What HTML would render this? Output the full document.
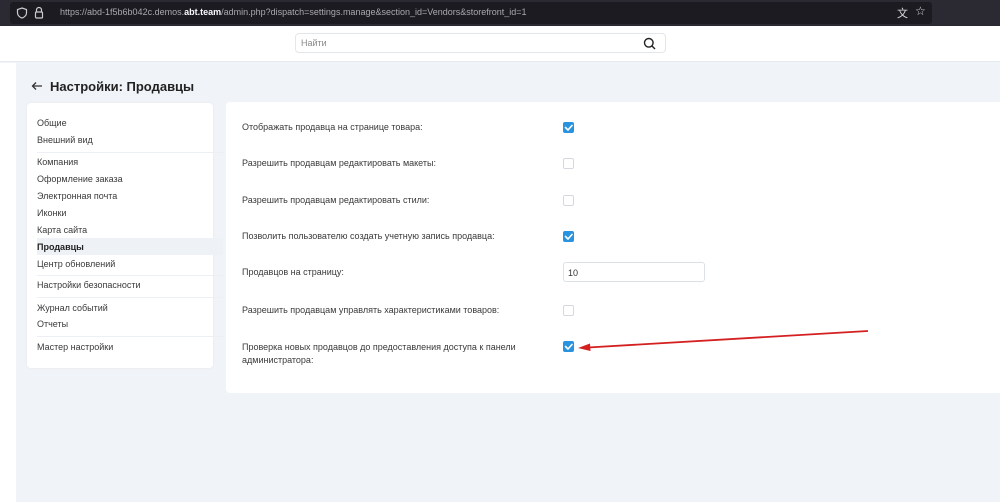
<!DOCTYPE html>
<html><head><meta charset="utf-8">
<style>
*{margin:0;padding:0;box-sizing:border-box}
body{width:1000px;height:502px;overflow:hidden;background:#f0f3f7;font-family:"Liberation Sans",sans-serif;position:relative;color:#3a3a3a}
.top{position:absolute;left:0;top:0;width:1000px;height:26px;background:#2b2a33}
.url{position:absolute;left:10px;top:2px;width:922px;height:22px;background:#1c1b22;border-radius:3px}
.url span{position:absolute;left:50px;top:5px;font-size:9px;color:#a9a9b0;white-space:nowrap}
.url b{color:#fbfbfe;font-weight:bold}
.hdr{position:absolute;left:0;top:26px;width:1000px;height:36px;background:#fff;border-bottom:1px solid #e6e9ee}
.search{position:absolute;left:295px;top:7px;width:371px;height:20px;border:1px solid #e3e6ea;border-radius:4px;background:#fff}
.search span{position:absolute;left:5px;top:4px;font-size:9px;color:#888}
.strip{position:absolute;left:0;top:63px;width:16px;height:439px;background:#fff}
h1{position:absolute;left:32px;top:79px;font-size:13px;font-weight:bold;color:#222}
.side{position:absolute;left:27px;top:103px;width:186px;height:265px;background:#fff;border-radius:4px;box-shadow:0 0 2px rgba(0,0,0,.06)}
.side div{position:absolute;left:10px;font-size:9px;color:#3a3a3a}
.sep{position:absolute;left:0;width:186px;height:1px;background:#eceff3}
.act{position:absolute;left:0;top:135px;width:186px;height:17px;background:#eef1f6}
.main{position:absolute;left:226px;top:102px;width:774px;height:291px;background:#fff;border-radius:4px 0 0 4px}
.lbl{position:absolute;left:16px;font-size:9px;color:#3a3a3a;line-height:13px}
.cb{position:absolute;left:337px;width:11px;height:11px;border:1px solid #d5d9de;border-radius:2px;background:#fff}
.cb.on{background:#2a93e0;border-color:#2a93e0}
.inp{position:absolute;left:337px;top:160px;width:142px;height:20px;border:1px solid #dde1e6;border-radius:3px;font-size:9px;padding:5px 4px;color:#333}
</style></head><body>
<div class="top"><div class="url">
<svg style="position:absolute;left:6px;top:5px" width="12" height="12" viewBox="0 0 12 12"><path d="M6 1 L10.5 2.5 V6 C10.5 8.5 8 10.5 6 11 C4 10.5 1.5 8.5 1.5 6 V2.5 Z" fill="none" stroke="#ccc" stroke-width="1.2"/></svg>
<svg style="position:absolute;left:24px;top:4px" width="10" height="13" viewBox="0 0 10 13"><path d="M2.5 6 V4 a2.5 2.5 0 0 1 5 0 V6" fill="none" stroke="#ccc" stroke-width="1.2"/><rect x="1.5" y="6" width="7" height="6" rx="1" fill="none" stroke="#ccc" stroke-width="1.2"/></svg>
<span>https://abd-1f5b6b042c.demos.<b>abt.team</b>/admin.php?dispatch=settings.manage&amp;section_id=Vendors&amp;storefront_id=1</span>
<span style="left:887px;top:3px;font-size:11px;color:#ddd">文</span>
<span style="left:905px;top:2px;font-size:12px;color:#ddd">☆</span>
</div></div>
<div class="hdr"><div class="search"><span>Найти</span>
<svg style="position:absolute;left:347px;top:3px" width="13" height="13" viewBox="0 0 13 13"><circle cx="5.8" cy="5.8" r="4.3" fill="none" stroke="#222" stroke-width="1.4"/><path d="M9 9 L12 12" stroke="#222" stroke-width="1.4"/></svg>
</div></div>
<div class="strip"></div>
<svg style="position:absolute;left:31px;top:81px" width="12" height="10" viewBox="0 0 12 10"><path d="M11 5 H1.5 M5 1.5 L1.5 5 L5 8.5" fill="none" stroke="#333" stroke-width="1.3"/></svg>
<h1 style="left:50px">Настройки: Продавцы</h1>
<div class="side">
<div class="act"></div>
<div style="top:15px">Общие</div>
<div style="top:32px">Внешний вид</div>
<div class="sep" style="top:49px"></div>
<div style="top:54px">Компания</div>
<div style="top:71px">Оформление заказа</div>
<div style="top:88px">Электронная почта</div>
<div style="top:105px">Иконки</div>
<div style="top:122px">Карта сайта</div>
<div style="top:139px;font-weight:bold;color:#222">Продавцы</div>
<div style="top:156px">Центр обновлений</div>
<div class="sep" style="top:172px"></div>
<div style="top:177px">Настройки безопасности</div>
<div class="sep" style="top:194px"></div>
<div style="top:200px">Журнал событий</div>
<div style="top:216px">Отчеты</div>
<div class="sep" style="top:233px"></div>
<div style="top:239px">Мастер настройки</div>
</div>
<div class="main">
<div class="lbl" style="top:19px">Отображать продавца на странице товара:</div>
<div class="cb on" style="top:20px"></div>
<div class="lbl" style="top:55px">Разрешить продавцам редактировать макеты:</div>
<div class="cb" style="top:56px"></div>
<div class="lbl" style="top:92px">Разрешить продавцам редактировать стили:</div>
<div class="cb" style="top:93px"></div>
<div class="lbl" style="top:128px">Позволить пользователю создать учетную запись продавца:</div>
<div class="cb on" style="top:129px"></div>
<div class="lbl" style="top:164px">Продавцов на страницу:</div>
<div class="inp">10</div>
<div class="lbl" style="top:202px">Разрешить продавцам управлять характеристиками товаров:</div>
<div class="cb" style="top:203px"></div>
<div class="lbl" style="top:239px">Проверка новых продавцов до предоставления доступа к панели<br>администратора:</div>
<div class="cb on" style="top:239px"></div>
</div>
<svg style="position:absolute;left:0;top:0" width="1000" height="502">
<g fill="none" stroke="#fff" stroke-width="1.6" stroke-linecap="round" stroke-linejoin="round">
<path d="M565.5 127.5 l2.5 2.5 l4 -4.5"/><path d="M565.5 236.5 l2.5 2.5 l4 -4.5"/><path d="M565.5 346.5 l2.5 2.5 l4 -4.5"/>
</g>
<path d="M868 331 L588 347.5" stroke="#d42020" stroke-width="1.8"/>
<path d="M578 348 L590 343.5 L590.5 351 Z" fill="#d42020"/>
</svg>
</body></html>
